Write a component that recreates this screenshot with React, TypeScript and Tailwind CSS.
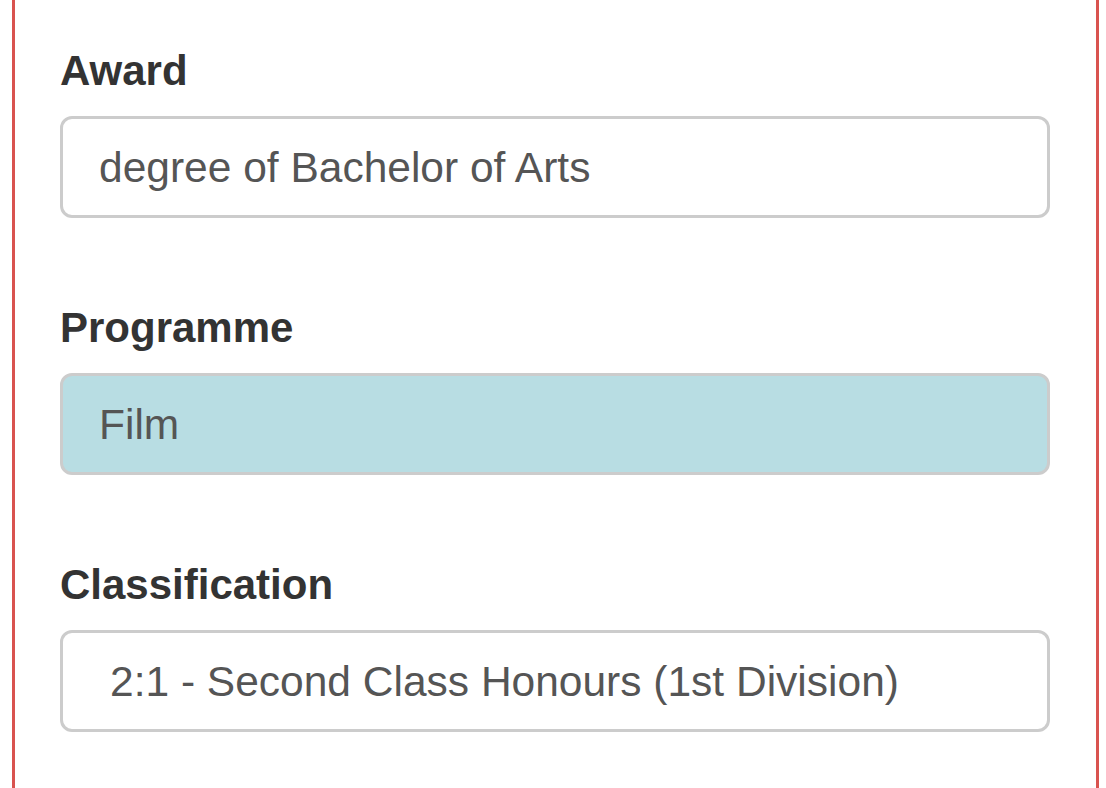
import * as React from "react";

type Field = {
  label: string;
  value: string;
  highlighted?: boolean;
  select?: boolean;
};

const fields: Field[] = [
  { label: "Award", value: "degree of Bachelor of Arts" },
  { label: "Programme", value: "Film", highlighted: true },
  {
    label: "Classification",
    value: "2:1 - Second Class Honours (1st Division)",
    select: true,
  },
];

function FormField({ label, value, highlighted, select }: Field) {
  return (
    <div className="flex flex-col">
      <label className="mb-[15px] text-[42px] leading-[60px] font-bold text-[#333333]">
        {label}
      </label>
      <div
        className={
          "flex h-[102px] items-center rounded-[12px] border-[3px] border-[#cccccc] pt-[2px] text-[42.5px] leading-[60px] text-[#555555] " +
          (select ? "pl-[47px] " : "pl-[36px] ") +
          (highlighted ? "bg-[#b8dde3]" : "bg-white")
        }
      >
        {value}
      </div>
    </div>
  );
}

export default function App() {
  return (
    <div className="h-[788px] overflow-hidden bg-white font-['Liberation_Sans',Arial,sans-serif]">
      <div className="ml-[12px] mr-[7px] flex h-full flex-col gap-[80px] border-x-[3px] border-[#d9534f] pt-[41px] pr-[46px] pl-[45px]">
        {fields.map((f) => (
          <FormField key={f.label} {...f} />
        ))}
      </div>
    </div>
  );
}
